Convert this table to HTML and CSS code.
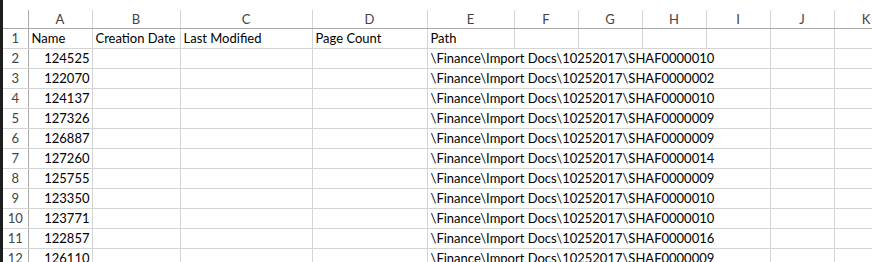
FILE: index.html
```html
<!DOCTYPE html>
<html lang="en">
<head>
    <meta charset="UTF-8">
    <title>Import Docs</title>
    <link rel="stylesheet" href="styles.css">
</head>
<body>

<div class="sheet">
    <table class="grid">
        <colgroup>
            <col class="col-rownum">
            <col class="col-a">
            <col class="col-b">
            <col class="col-c">
            <col class="col-d">
            <col class="col-e">
            <col class="col-n">
            <col class="col-n">
            <col class="col-n">
            <col class="col-n">
            <col class="col-n">
            <col class="col-k">
        </colgroup>
        <thead>
            <tr class="col-heads">
                <th class="corner"></th>
                <th>A</th><th>B</th><th>C</th><th>D</th><th>E</th>
                <th>F</th><th>G</th><th>H</th><th>I</th><th>J</th><th>K</th>
            </tr>
        </thead>
        <tbody>
            <tr>
                <th class="rownum">1</th>
                <td>Name</td>
                <td>Creation Date</td>
                <td>Last Modified</td>
                <td>Page Count</td>
                <td>Path</td>
                <td></td><td></td><td></td><td></td><td></td><td></td>
            </tr>
            <tr>
                <th class="rownum">2</th>
                <td class="num">124525</td><td></td><td></td><td></td>
                <td class="path" colspan="5">\Finance\Import Docs\10252017\SHAF0000010</td>
                <td></td><td></td>
            </tr>
            <tr>
                <th class="rownum">3</th>
                <td class="num">122070</td><td></td><td></td><td></td>
                <td class="path" colspan="5">\Finance\Import Docs\10252017\SHAF0000002</td>
                <td></td><td></td>
            </tr>
            <tr>
                <th class="rownum">4</th>
                <td class="num">124137</td><td></td><td></td><td></td>
                <td class="path" colspan="5">\Finance\Import Docs\10252017\SHAF0000010</td>
                <td></td><td></td>
            </tr>
            <tr>
                <th class="rownum">5</th>
                <td class="num">127326</td><td></td><td></td><td></td>
                <td class="path" colspan="5">\Finance\Import Docs\10252017\SHAF0000009</td>
                <td></td><td></td>
            </tr>
            <tr>
                <th class="rownum">6</th>
                <td class="num">126887</td><td></td><td></td><td></td>
                <td class="path" colspan="5">\Finance\Import Docs\10252017\SHAF0000009</td>
                <td></td><td></td>
            </tr>
            <tr>
                <th class="rownum">7</th>
                <td class="num">127260</td><td></td><td></td><td></td>
                <td class="path" colspan="5">\Finance\Import Docs\10252017\SHAF0000014</td>
                <td></td><td></td>
            </tr>
            <tr>
                <th class="rownum">8</th>
                <td class="num">125755</td><td></td><td></td><td></td>
                <td class="path" colspan="5">\Finance\Import Docs\10252017\SHAF0000009</td>
                <td></td><td></td>
            </tr>
            <tr>
                <th class="rownum">9</th>
                <td class="num">123350</td><td></td><td></td><td></td>
                <td class="path" colspan="5">\Finance\Import Docs\10252017\SHAF0000010</td>
                <td></td><td></td>
            </tr>
            <tr>
                <th class="rownum">10</th>
                <td class="num">123771</td><td></td><td></td><td></td>
                <td class="path" colspan="5">\Finance\Import Docs\10252017\SHAF0000010</td>
                <td></td><td></td>
            </tr>
            <tr>
                <th class="rownum">11</th>
                <td class="num">122857</td><td></td><td></td><td></td>
                <td class="path" colspan="5">\Finance\Import Docs\10252017\SHAF0000016</td>
                <td></td><td></td>
            </tr>
            <tr>
                <th class="rownum">12</th>
                <td class="num">126110</td><td></td><td></td><td></td>
                <td class="path" colspan="5">\Finance\Import Docs\10252017\SHAF0000009</td>
                <td></td><td></td>
            </tr>
        </tbody>
    </table>
</div>

</body>
</html>
```

FILE: styles.css
```css
/* worksheet grid */
body {
    margin: 0;
    padding: 0;
    background-color: #ffffff;
    font-family: Lato, "Liberation Sans", sans-serif;
    overflow: hidden;
}

.sheet {
    border-left: 3px solid #1e1e1e;
    padding-top: 10px;
    height: 262px;
    box-sizing: border-box;
}

.grid {
    border-collapse: collapse;
    table-layout: fixed;
    width: 895px;
    font-size: 13px;
    color: #000000;
}

.col-rownum { width: 25px; }
.col-a { width: 64px; }
.col-b { width: 88px; }
.col-c { width: 132px; }
.col-d { width: 115px; }
.col-e { width: 87px; }
.col-n { width: 64px; }
.col-k { width: 64px; }

.grid th,
.grid td {
    height: 19px;
    padding: 0 3px;
    border: 1px solid #d4d4d4;
    white-space: nowrap;
    overflow: visible;
    line-height: 19px;
    font-weight: normal;
    text-align: left;
    vertical-align: bottom;
}

.col-heads th {
    border-top: none;
    border-bottom: 1px solid #ababab;
    color: #444444;
    text-align: center;
    font-size: 13px;
    height: 18px;
    line-height: 18px;
}

.col-heads th.corner {
    border-left: none;
    border-right: 1px solid #ababab;
}

.rownum {
    border-left: none !important;
    border-right: 1px solid #ababab !important;
    color: #444444;
    text-align: center !important;
    font-size: 13px;
    padding: 0 !important;
}

.grid td.num {
    text-align: right;
    padding-right: 2px;
}

.grid td.path {
    padding-left: 3px;
}
```
